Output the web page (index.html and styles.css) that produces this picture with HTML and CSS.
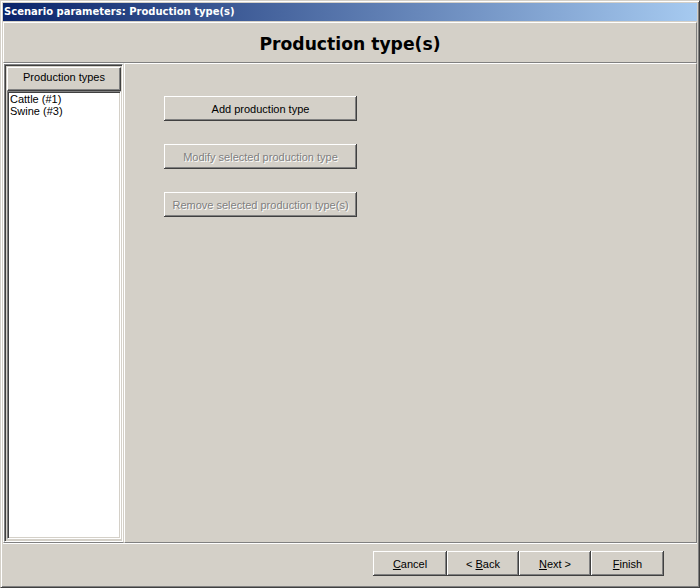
FILE: index.html
```html
<!DOCTYPE html>
<html>
<head>
<meta charset="utf-8">
<link rel="stylesheet" href="styles.css">
</head>
<body>
<div class="window">
  <div class="titlebar">Scenario parameters: Production type(s)</div>
  <div class="client">
    <div class="header">Production type(s)</div>
    <div class="middle">
      <div class="leftpanel">
        <div class="leftinner">
          <div class="listhead">Production types</div>
          <div class="list">
            <div class="item">Cattle (#1)</div>
            <div class="item">Swine (#3)</div>
          </div>
        </div>
      </div>
      <div class="rightpanel">
        <button class="btn action">Add production type</button>
        <button class="btn action disabled">Modify selected production type</button>
        <button class="btn action disabled">Remove selected production type(s)</button>
      </div>
    </div>
    <div class="footer">
      <button class="btn nav w74"><u>C</u>ancel</button>
      <button class="btn nav w72">&lt; <u>B</u>ack</button>
      <button class="btn nav w72"><u>N</u>ext &gt;</button>
      <button class="btn nav w73"><u>F</u>inish</button>
    </div>
  </div>
</div>
</body>
</html>
```
FILE: styles.css
```css
* { box-sizing: border-box; }
html, body { margin: 0; padding: 0; }
body {
  background: #d4d0c8;
  font-family: "Liberation Sans", Arial, sans-serif;
  font-size: 11px;
  color: #000;
}
.window {
  width: 700px;
  height: 588px;
  border: 1px solid;
  border-color: #d4d0c8 #404040 #404040 #d4d0c8;
  box-shadow: inset 1px 1px #fff, inset -1px -1px #808080;
  padding: 2px;
  display: flex;
  flex-direction: column;
}
.titlebar {
  height: 18px;
  flex: none;
  background: linear-gradient(to right, #0a246a, #a6caf0);
  color: #fff;
  font-family: "DejaVu Sans", sans-serif;
  font-weight: bold;
  font-size: 10px;
  line-height: 18px;
  padding-left: 1px;
  white-space: nowrap;
}
.client {
  flex: 1;
  display: flex;
  flex-direction: column;
  min-height: 0;
}
.header {
  margin-top: 1px;
  height: 41px;
  flex: none;
  border-top: 1px solid #fff;
  border-left: 1px solid #fff;
  border-bottom: 1px solid #808080;
  border-right: 1px solid #808080;
  display: flex;
  align-items: center;
  justify-content: center;
  font-family: "DejaVu Sans", sans-serif;
  font-weight: bold;
  font-size: 17.2px;
  padding-top: 2px;
}
.middle {
  flex: 1;
  display: flex;
  min-height: 0;
}
.leftpanel {
  width: 121px;
  flex: none;
  border-top: 1px solid #fff;
  border-left: 1px solid #fff;
  border-bottom: 1px solid #808080;
  border-right: 1px solid #d4d0c8;
  display: flex;
}
.leftinner {
  flex: 1;
  border-top: 1px solid #808080;
  border-left: 1px solid #808080;
  border-bottom: 1px solid #fff;
  border-right: 1px solid #fff;
  box-shadow: inset 1px 1px #404040;
  padding: 1px;
  display: flex;
  flex-direction: column;
}
.listhead {
  height: 24px;
  flex: none;
  margin: 1px 0 0 1px;
  border-top: 1px solid #fff;
  border-left: 1px solid #fff;
  border-bottom: 1px solid #404040;
  border-right: 1px solid #404040;
  box-shadow: inset -1px -1px #808080;
  display: flex;
  align-items: center;
  justify-content: center;
  padding-bottom: 4px;
}
.list {
  flex: 1;
  margin: 0 0 1px 1px;
  background: #fff;
  border-top: 1px solid #808080;
  border-left: 1px solid #808080;
  border-bottom: 1px solid #fff;
  border-right: 1px solid #fff;
  box-shadow: inset 1px 1px #404040, inset -1px -1px #d4d0c8;
  padding: 1px 2px 0 2px;
}
.item {
  height: 12px;
  line-height: 12px;
  white-space: nowrap;
}
.rightpanel {
  flex: 1;
  border-top: 1px solid #fff;
  border-left: 1px solid #fff;
  border-bottom: 1px solid #808080;
  border-right: 1px solid #808080;
  padding: 32px 0 0 39px;
  display: flex;
  flex-direction: column;
  align-items: flex-start;
  gap: 23px;
}
.btn {
  font-family: "Liberation Sans", Arial, sans-serif;
  font-size: 11px;
  color: #000;
  background: #d4d0c8;
  border: none;
  margin: 0;
  height: 25px;
  padding: 1px 0 0 0;
  box-shadow: inset -1px -1px #404040, inset 1px 1px #fff, inset -2px -2px #808080;
  text-align: center;
  line-height: 23px;
}
.action { width: 193px; }
.btn.disabled {
  color: #808080;
  text-shadow: 1px 1px #fff;
}
.footer {
  height: 42px;
  flex: none;
  border-top: 1px solid #fff;
  display: flex;
  justify-content: flex-end;
  align-items: flex-start;
  padding: 7px 33px 0 0;
}
.w74 { width: 74px; }
.w72 { width: 72px; }
.w73 { width: 73px; }
```
